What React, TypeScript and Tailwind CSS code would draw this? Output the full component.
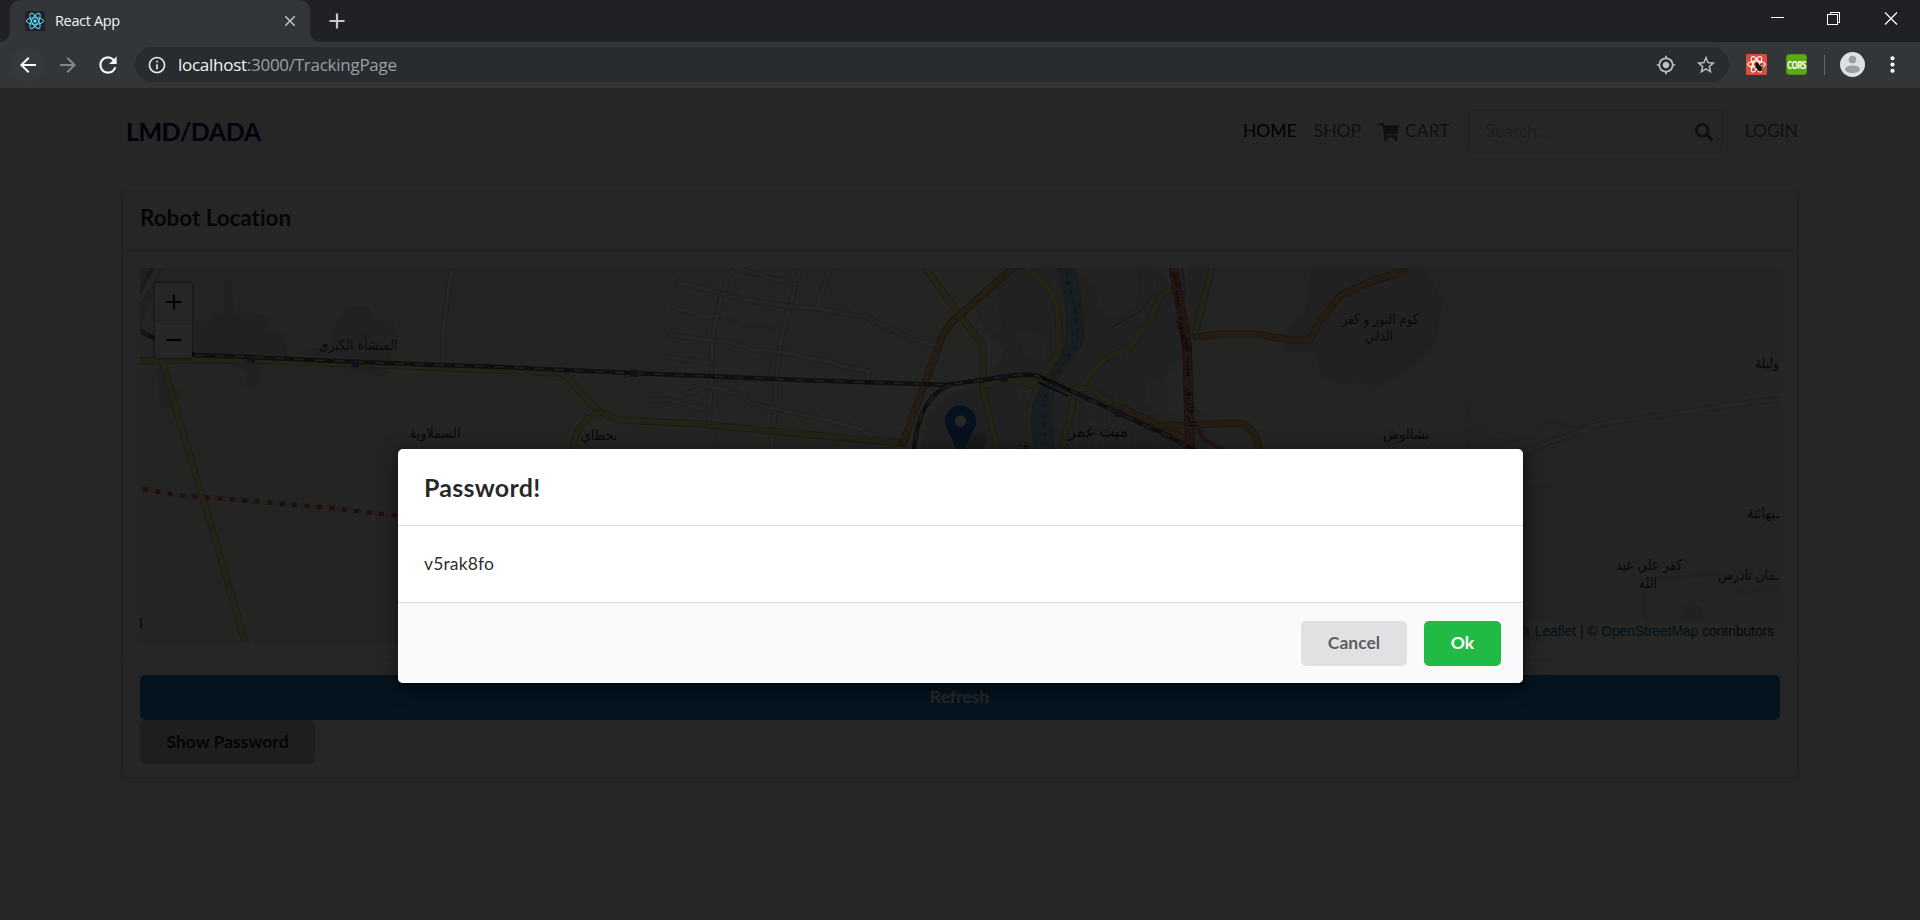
import type { ReactNode } from "react";
import {
  MdAdd,
  MdArrowBack,
  MdArrowForward,
  MdClose,
  MdInfoOutline,
  MdMoreVert,
  MdMyLocation,
  MdRefresh,
  MdStarBorder,
} from "react-icons/md";
import { FaSearch, FaShoppingCart } from "react-icons/fa";

function ReactLogo() {
  return (
    <svg viewBox="0 0 20 20" className="size-5 shrink-0">
      <rect width="20" height="20" rx="1.5" fill="#20232a" />
      <g fill="none" stroke="#61dafb" strokeWidth="1">
        <ellipse cx="10" cy="10" rx="8.6" ry="3.3" />
        <ellipse cx="10" cy="10" rx="8.6" ry="3.3" transform="rotate(60 10 10)" />
        <ellipse cx="10" cy="10" rx="8.6" ry="3.3" transform="rotate(120 10 10)" />
      </g>
      <circle cx="10" cy="10" r="1.7" fill="#61dafb" />
    </svg>
  );
}

function DevToolsIcon() {
  return (
    <svg viewBox="0 0 21 21" className="h-[21px] w-[21px] shrink-0">
      <rect width="21" height="21" rx="1.5" fill="#dd4b39" />
      <g fill="none" stroke="#fff" strokeWidth="1.2">
        <ellipse cx="10.5" cy="10.3" rx="8.8" ry="3.3" />
        <ellipse cx="10.5" cy="10.3" rx="8.8" ry="3.3" transform="rotate(60 10.5 10.3)" />
        <ellipse cx="10.5" cy="10.3" rx="8.8" ry="3.3" transform="rotate(120 10.5 10.3)" />
      </g>
      <g stroke="#111" strokeWidth="0.8" strokeLinecap="round">
        <ellipse cx="13.2" cy="13.8" rx="2.1" ry="3.4" fill="#111" transform="rotate(-35 13.2 13.8)" />
        <circle cx="10.9" cy="10.4" r="1.3" fill="#111" />
        <path d="M9 13.5l3 .3M10.500 17l2-1.600M15 9.500l-1 2M16.600 12.800l-2 .2M16.500 17l-1.500-1.500" fill="none" />
      </g>
    </svg>
  );
}

function Avatar() {
  return (
    <svg viewBox="0 0 25 25" className="h-[25px] w-[25px] shrink-0">
      <circle cx="12.5" cy="12.5" r="12.5" fill="#dfe0e1" />
      <circle cx="12.5" cy="7.6" r="3.8" fill="#9c9d9e" />
      <ellipse cx="12.5" cy="17.3" rx="7.4" ry="3.9" fill="#9c9d9e" />
    </svg>
  );
}

function BrowserChrome() {
  return (
    <header className="h-[88px] bg-[#202124]">
      <div className="flex h-[42px] items-start">
        <div className="flex h-full w-[10px] items-end bg-[#323639]">
          <div className="h-full w-full rounded-br-[10px] bg-[#202124]" />
        </div>
        <div className="flex h-full w-[300px] items-center rounded-t-[10px] bg-[#323639] pr-[11px] pl-[15px]">
          <ReactLogo />
          <span className="ml-[10px] grow font-['Open_Sans',sans-serif] text-[14.5px] tracking-[-0.35px] text-[#f1f3f4]">
            React App
          </span>
          <MdClose className="size-[18px] text-[#c1c4c7]" />
        </div>
        <div className="h-full w-[10px] bg-[#323639]">
          <div className="h-full w-full rounded-bl-[10px] bg-[#202124]" />
        </div>
        <div className="flex h-full grow items-center pl-[4px]">
          <MdAdd className="size-[26px] text-[#c5c8cb]" />
        </div>
        <div className="flex pt-3 pr-[22px]">
          <svg viewBox="0 0 128 14" className="h-[14px] w-[128px]" shapeRendering="crispEdges">
            <path d="M1 5.500h13" stroke="#fff" fill="none" />
            <path d="M57.500 2.500h10v10h-10z M60 2V.500h9.500v10H68" stroke="#fff" fill="none" />
            <path d="M115 .500l12 12M127 .500l-12 12" stroke="#fff" strokeWidth="1.2" fill="none" shapeRendering="auto" />
          </svg>
        </div>
      </div>
      <div className="flex h-[46px] items-center bg-[#323639] pb-px">
        <div className="ml-[10px] flex h-[35px] w-[35px] items-center justify-center rounded-full bg-[#36393c]">
          <MdArrowBack className="size-6 text-white" />
        </div>
        <div className="ml-[11px] flex w-6 justify-center">
          <MdArrowForward className="size-6 text-[#83868a]" />
        </div>
        <div className="ml-[15px] flex w-[26px] justify-center">
          <MdRefresh className="size-[26px] text-[#f4f5f6]" />
        </div>
        <div className="ml-[14px] flex h-[35px] w-[1594px] items-center rounded-full bg-[#282c2f] pl-[12px]">
          <MdInfoOutline className="size-5 text-[#e8eaed]" />
          <div className="ml-[11px] grow font-['Open_Sans',sans-serif] text-[17px] tracking-[-0.27px] text-[#9aa0a6]">
            <span className="text-[#f1f3f4]">localhost</span>:3000/TrackingPage
          </div>
          <MdMyLocation className="size-5 text-[#bdc1c6]" />
          <MdStarBorder className="mr-[12px] ml-[19px] size-[22px] text-[#bdc1c6]" />
        </div>
        <div className="ml-[17px] flex items-center">
          <DevToolsIcon />
          <div className="ml-[19px] flex h-[21px] w-[21px] items-center justify-center rounded-[3px] border border-[#4f8f12] bg-[#59ab0e] font-['Open_Sans',sans-serif] text-[8px] font-bold tracking-[-0.6px] text-white">
            <span className="origin-center scale-y-125">CORS</span>
          </div>
          <div className="ml-[17px] h-5 w-px bg-[#65686b]" />
          <div className="ml-[15px] flex">
            <Avatar />
          </div>
          <MdMoreVert className="ml-[15px] size-[25px] text-white" />
        </div>
      </div>
    </header>
  );
}

type RoadProps = { d: string; fill: string; casing: string; width: number };

function Road({ d, fill, casing, width }: RoadProps) {
  return (
    <g fill="none" strokeLinejoin="round" strokeLinecap="round">
      <path d={d} stroke={casing} strokeWidth={width} />
      <path d={d} stroke={fill} strokeWidth={width - 1.6} />
    </g>
  );
}

const minorRoads = [
  "M733 268L722 294L716 320L712 345L711 382L709 420L711 426",
  "M800 268L790 305L781 340L776 380L774 420L771 450",
  "M678 282L720 293L745 300L780 305L820 309L866 317L880 324L910 338L937 346",
  "M734 268L760 275L795 284",
  "M830 268L817 308",
  "M673 307L706 317L718 316",
  "M670 335L712 341L725 341L755 350L780 352L810 358L830 362L845 367L868 371L868 379",
  "M670 357L688 360L710 363",
  "M649 400L669 400L708 386L745 396L748 402L773 408L830 421L860 429L866 433L892 441",
  "M669 400L707 410",
  "M452 268L447 300L443 335L443 364",
  "M1523 452L1600 424L1620 421L1700 410L1750 402L1780 400",
  "M140 300L158 268",
];

const thinRoads = [
  "M718 317L740 323L748 327L760 324L780 331",
  "M711 381L770 381L776 388",
  "M711 426L720 449",
  "M1465 403L1472 425L1468 449M1472 425C1485 424 1488 438 1496 441L1530 438L1540 428C1552 412 1560 430 1580 426L1620 421",
  "M1158 268L1160 290L1140 315L1090 340L1050 392",
  "M1125 354L1133 363Q1145 370 1144 355M1131 365L1113 400",
  "M1362 290L1374 290L1367 313M1310 341L1335 342L1345 330L1365 320",
  "M1186 268L1189 330M1032 449L1028 420L1035 388",
  "M1658 578L1720 574M1644 590L1647 643M1736 582Q1738 594 1745 593L1780 586",
  "M1524 486Q1540 489 1550 485",
  "M1058 402L1110 416L1165 449M1070 398L1064 449M1078 402L1075 449M1090 408L1088 449M1105 415L1103 449M1120 420L1120 449M1135 428L1135 449M1060 415L1100 425L1130 445M1060 430L1100 440",
];

const yellowRoads = [
  "M140 361L195 360L250 360L400 366L555 373Q562 373 567 377L590 403Q600 414 620 420L700 424L770 431L900 443",
  "M600 412Q574 424 573 450",
  "M162 361L188 450L203 498L246 645",
  "M925 268L960 315L983 346L983 390L990 420L998 450",
  "M1025 268Q1052 283 1057 308Q1060 330 1058 355L1040 378L1032 385L1010 380L983 386",
  "M1175 290Q1160 292 1158 302L1148 325L1138 335L1132 346L1105 359L1083 383L1075 393L1062 450",
  "M1212 268L1195 334",
  "M1040 378L1075 390L1088 388L1115 405",
];

const orangeRoads = [
  "M1015 266L960 315Q946 325 940 342L903 443",
  "M1197 337L1220 334L1258 334L1290 340L1310 340L1320 320L1340 296L1372 281L1402 272L1405 268",
  "M1115 405L1160 425L1188 441",
  "M1160 426L1195 425L1235 423Q1256 424 1259 450",
];

const railway =
  "M140 331L160 341L196 355L250 357L355 362L500 367L633 373L800 380L920 384L945 385L975 381L1003 377Q1025 373 1038 376L1060 386L1100 404L1118 413L1160 432L1195 450";
const railBranch = "M950 385Q918 398 914 450";

const residential = [
  "M224 280L231 280L234 313L268 315L267 330L282 333L290 357L262 370L258 383L247 390L244 386L250 372L235 366L195 358L195 325L213 320L213 311L224 314Z",
  "M347 307L370 307L370 320L395 323L392 352L387 378L340 368L308 365L307 350L330 345L333 330Z",
  "M157 362L166 384L180 390L179 400L172 410L160 407Z",
  "M140 268L163 268L140 330Z",
  "M1005 268L1160 268L1180 300L1186 350L1166 375L1160 400L1180 425L1185 450L920 450L925 420L950 392L985 384L1005 350L985 330L975 310Z",
  "M1188 268L1212 268L1196 330L1190 330ZM1190 405L1205 415L1208 450L1190 450Z",
  "M1312 268L1425 268L1433 283L1443 300L1440 318L1437 342L1418 362L1405 374L1392 378L1375 387L1355 382L1340 386L1322 377L1315 352L1285 352L1284 335L1294 320L1305 308Z",
  "M1685 606L1701 606L1704 622L1680 622L1682 612Z",
];

type LabelProps = {
  x: number;
  y: number;
  size?: number;
  width?: number;
  anchor?: "start" | "middle";
  children: ReactNode;
};

function Label({ x, y, size = 14.5, width, anchor = "middle", children }: LabelProps) {
  return (
    <text
      x={x}
      y={y}
      fontSize={size}
      textAnchor={anchor}
      textLength={width}
      lengthAdjust="spacingAndGlyphs"
      fill="#3c3c3c"
      stroke="#fff"
      strokeOpacity="0.4"
      strokeWidth="1.2"
      paintOrder="stroke"
    >
      {children}
    </text>
  );
}

function MapCanvas() {
  return (
    <svg viewBox="140 268 1640 375" className="block h-[375px] w-[1640px] font-['DejaVu_Sans',sans-serif]">
      <rect x="140" y="268" width="1640" height="375" fill="#f0eee0" />
      {residential.map((d) => (
        <path key={d} d={d} fill="#dedddd" />
      ))}
      <path
        d="M1075 268h60q8 20-2 40l-20 10q-18-10-15-25zM985 288l10 2 8 40-12 6-12-25zM1018 330l30 8-4 25-20-8zM1020 385l12 4-4 12-10-2zM1150 372l14 14 0 30-20-12z"
        fill="#ebe9df"
      />
      <path
        d="M1057 268L1076 268L1082 300L1085 338Q1080 352 1063 372Q1051 392 1053 420L1055 450L1033 450L1030 422Q1031 402 1038 390Q1056 365 1062 350Q1069 335 1064 300Z"
        fill="#a3c8d8"
      />
      <path d="M1066 272L1074 305L1079 335Q1076 348 1060 368Q1046 385 1043 410L1047 450" fill="none" stroke="#8f86ad" strokeWidth="2.4" strokeDasharray="3.500 6" />
      <path d="M1182 268L1186 300M1160 290L1140 312L1100 335" fill="none" stroke="#a3c8d8" strokeWidth="3" />
      <path d="M140 292L152 268" fill="none" stroke="#8fb9bd" strokeWidth="4" />

      {thinRoads.map((d) => (
        <g key={d} fill="none">
          <path d={d} stroke="#cfcdca" strokeWidth="2.6" />
          <path d={d} stroke="#f8f8f8" strokeWidth="1.2" />
        </g>
      ))}
      {minorRoads.map((d) => (
        <Road key={d} d={d} fill="#f6f6f6" casing="#bdbbbe" width={5.6} />
      ))}
      {yellowRoads.map((d) => (
        <Road key={d} d={d} fill="#eceb9f" casing="#b5b76a" width={6.8} />
      ))}
      {orangeRoads.map((d) => (
        <Road key={d} d={d} fill="#f2bf7f" casing="#b98545" width={7.2} />
      ))}
      <Road d="M1173 266L1182 315L1187 345L1190 452" fill="#e59a8e" casing="#b0564e" width={9.5} />
      <path d="M1196 425L1204 440L1225 450" fill="none" stroke="#d98a80" strokeWidth="4" />
      <path d="M1520 626L1540 643" fill="none" stroke="#e59a8e" strokeWidth="8" />

      <path d="M140 487L155 491L175 495L240 500L330 508L400 516" fill="none" stroke="#efe0da" strokeWidth="5" />
      <path d="M143 489L155 491L175 495L240 500L330 508L400 516" fill="none" stroke="#c9695f" strokeWidth="4.500" strokeDasharray="5 7.500" />

      {[railway, railBranch].map((d) => (
        <g key={d} fill="none">
          <path d={d} stroke="#606060" strokeWidth="4.4" />
          <path d={d} stroke="#d0d0d0" strokeWidth="1.700" strokeDasharray="9 11" />
        </g>
      ))}
      <path d="M1040 376L1071 390M1038 382L1068 396" stroke="#333" strokeWidth="1.500" />
      <g fill="#7373b4">
        <rect x="247.500" y="354.500" width="7.5" height="7.5" />
        <rect x="351.500" y="359.500" width="7.5" height="7.5" />
        <rect x="630" y="369.500" width="7.5" height="7.5" />
        <rect x="1000.500" y="374.500" width="7.5" height="7.5" />
        <rect x="1115.500" y="409.500" width="7.5" height="7.5" />
      </g>

      <Label x={358} y={350} width={79}>المنشأة الكبرى</Label>
      <Label x={435} y={438} width={51}>السملاوية</Label>
      <Label x={599} y={440} width={37}>نحطاي</Label>
      <Label x={1098} y={437} size={17} width={60}>ميت غمر</Label>
      <Label x={1021} y={453} size={17} width={32}>زفتى</Label>
      <Label x={1380} y={324} width={77}>كوم النور و كفر</Label>
      <Label x={1379} y={341} width={28}>الدلي</Label>
      <Label x={1406} y={439} width={46}>بشالوش</Label>
      <Label x={1755} y={368} width={24} anchor="start">وليلة</Label>
      <Label x={1747} y={518} width={32} anchor="start">ـبهائتة</Label>
      <Label x={1649} y={570} width={66}>كفر علي عبد</Label>
      <Label x={1648} y={588} width={18}>الله</Label>
      <Label x={1718} y={580} width={61} anchor="start">ـمان تادرس</Label>
      <rect x="140" y="618" width="2" height="10" fill="#666" />
      <g fontSize="10" fill="#5a2a2a" textAnchor="middle">
        <text transform="translate(1178 312) rotate(83)" textLength="80" lengthAdjust="spacingAndGlyphs">المنصورة - ميت غمر</text>
        <text transform="translate(1187 381) rotate(88)" textLength="92" lengthAdjust="spacingAndGlyphs">الزقازيق - ميت غمر</text>
      </g>

      <ellipse cx="972" cy="446" rx="18" ry="9" fill="#000" opacity="0.2" transform="rotate(-35 972 446)" />
      <path
        d="M960.500 406C952 406 945.500 412.600 945.500 420.600C945.500 425.500 947.500 429 949.500 433L960.500 457L971.500 433C973.500 429 975.500 425.500 975.500 420.600C975.500 412.600 969 406 960.500 406Z"
        fill="#2a81cb"
        stroke="#2270b5"
        strokeWidth="1"
      />
      <circle cx="960.500" cy="421" r="5.600" fill="#fff" />
    </svg>
  );
}

function TrackingMap() {
  return (
    <div className="relative h-[375px] overflow-hidden">
      <MapCanvas />
      <div className="absolute top-[13px] left-[13px] rounded-[5px] border-2 border-black/20">
        <div className="flex h-[38px] w-[37px] items-center justify-center rounded-t-[2.500px] border-b border-[#ccc] bg-white">
          <svg viewBox="0 0 16 16" className="size-4"><path d="M.5 8h15M8 .5v15" stroke="#000" strokeWidth="2.200" /></svg>
        </div>
        <div className="flex h-[37px] w-[37px] items-center justify-center rounded-b-[2.500px] bg-white">
          <svg viewBox="0 0 16 16" className="size-4"><path d="M.5 8h15" stroke="#000" strokeWidth="2.200" /></svg>
        </div>
      </div>
      <div className="absolute right-0 bottom-0 flex h-[21px] items-center bg-white/70 px-[6px] font-['Liberation_Sans',sans-serif] text-[13.75px] whitespace-pre text-[#333]">
        <span className="text-[#0078a8]">Leaflet</span> | © <span className="text-[#0078a8]">OpenStreetMap</span> contributors
      </div>
    </div>
  );
}

function NavBar() {
  return (
    <nav className="flex h-[86px] items-center bg-white pt-px pr-[122px] pl-[126px] text-[17.5px] text-black/60">
      <span className="grow text-[25px] font-bold tracking-[-0.5px] text-[#14005a]">LMD/DADA</span>
      <span className="text-black">HOME</span>
      <span className="ml-[17px]">SHOP</span>
      <FaShoppingCart className="ml-[18px] h-[18px] w-[20px]" />
      <span className="ml-[6px]">CART</span>
      <div className="ml-[18px] flex h-[43px] w-[260px] items-center justify-between rounded-[5px] border border-[#22242626] bg-white px-[17px]">
        <span className="text-[#c2c2c2]">Search...</span>
        <FaSearch className="mr-[-3px] size-[18px]" />
      </div>
      <span className="ml-[17px]">LOGIN</span>
    </nav>
  );
}

function RobotCard() {
  return (
    <section className="mx-auto mt-[17px] h-[587px] w-[1676px] rounded-[5px] border border-[#22242626] bg-white shadow-[0_1px_3px_0_rgba(34,36,38,0.15)]">
      <div className="h-[59px] border-b border-[#22242626] px-[17px] pt-[8px]">
        <h2 className="text-[22.5px] leading-[36px] font-bold tracking-[-0.05px] text-black/85 [font-variant-ligatures:none]">
          Robot Location
        </h2>
      </div>
      <div className="h-[410px] border-b border-[#2224261a] px-[17px] pt-[17px]">
        <TrackingMap />
      </div>
      <div className="flex flex-col items-start px-[17px] pt-[14px] text-[17.5px] font-bold">
        <button className="h-[45px] w-full rounded-[5px] bg-[#2185d0] pr-px pb-px text-white">Refresh</button>
        <button className="h-[44px] w-[175px] rounded-[5px] bg-[#cacbcd] text-black/85">Show Password</button>
      </div>
    </section>
  );
}

function PasswordModal() {
  return (
    <div className="ml-px flex h-[234px] w-[1125px] flex-col overflow-hidden rounded-[5px] bg-white shadow-[1px_4px_4px_0_rgba(0,0,0,0.4),1px_4px_19px_2px_rgba(0,0,0,0.4)]">
      <div className="h-[77px] border-b border-[#22242626] px-[26px] pt-[22px] text-[25px] leading-[32px] font-bold tracking-[0.25px] text-black/85">
        Password!
      </div>
      <div className="h-[76px] px-[26px] pt-[25px] text-[17.5px] leading-[25px] tracking-[0.15px] text-black/85">v5rak8fo</div>
      <div className="flex grow items-start justify-end border-t border-[#22242626] bg-[#f9fafb] pt-[18px] pr-[22px] text-[17.5px] font-bold">
        <button className="h-[45px] w-[106px] rounded-[5px] bg-[#e0e1e2] text-black/60">Cancel</button>
        <button className="ml-[17px] h-[45px] w-[77px] rounded-[5px] bg-[#21ba45] text-white">Ok</button>
      </div>
    </div>
  );
}

export default function App() {
  return (
    <div className="h-[920px] w-[1920px] overflow-hidden font-['Lato',sans-serif]">
      <BrowserChrome />
      <main className="relative flow-root h-[832px] bg-[#fafafa]">
        <NavBar />
        <RobotCard />
        <div className="absolute inset-0 flex items-start justify-center bg-black/85 pt-[361px]">
          <PasswordModal />
        </div>
      </main>
    </div>
  );
}
